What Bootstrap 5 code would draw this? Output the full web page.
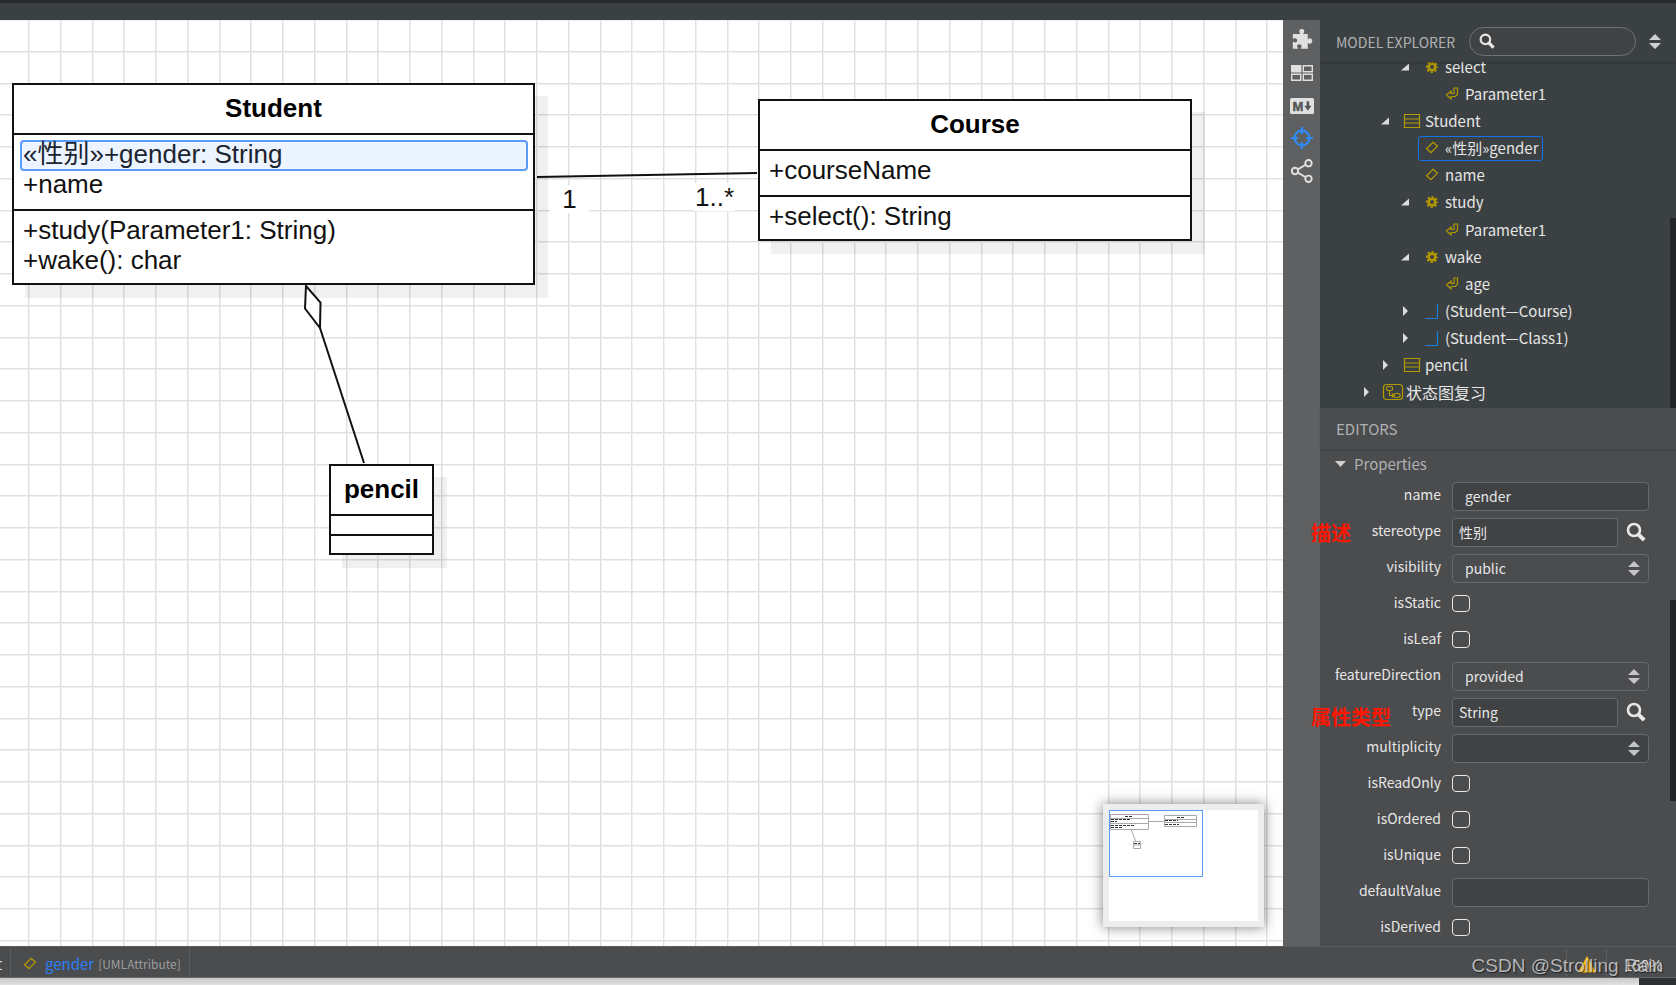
<!DOCTYPE html>
<html lang="en">
<head>
<meta charset="utf-8">
<meta name="viewport" content="width=device-width, initial-scale=1">
<title>Class diagram editor</title>
<link href="https://cdn.jsdelivr.net/npm/bootstrap@5.3.0/dist/css/bootstrap.min.css" rel="stylesheet">
<style>
  :root { --panel: #4b4c4e; --tree: #3b4042; --gold: #b39800; --text: #e6e6e6; --muted: #b0b1b2; --line: #66686a; }
  body { font-family: "Noto Sans CJK SC", sans-serif; font-size: 15px; line-height: 20px; color: var(--text); background: var(--tree); }
  .titlebar { height: 3px; background: #27292c; }
  .menubar { height: 17px; background: var(--tree); }
  .canvas { background: #fff; color: #111; font-family: "Liberation Sans", "Noto Sans CJK SC", sans-serif; font-size: 26px; line-height: 30px; }
  .layer { position: absolute; inset: 0; width: 100%; height: 100%; }

  /* diagram nodes */
  .uml { position: absolute; background: #fff; border: 2px solid #111; box-shadow: 13px 13px 0 rgba(0,0,0,.06); }
  .uml .head { font-weight: 700; text-align: center; height: 48px; padding-top: 8px; color: #000; }
  .uml .comp { border-top: 2px solid #111; padding: 4px 9px 0; }
  .student { left: 12px; top: 63px; width: 523px; height: 202px; }
  .course { left: 758px; top: 79px; width: 434px; height: 142px; }
  .pencil { left: 329px; top: 444px; width: 105px; height: 91px; }
  .attrs { height: 76px; }
  .attr { height: 46px; }
  .empty { height: 20px; }
  .picked { background: #ebf4ff; border: 2px solid #5a9cf8; border-radius: 4px; margin: 1px -4px 0 -3px; padding-left: 1px; line-height: 24px; height: 31px; color: #1b2430; }
  .picked + div { margin-top: -2px; }
  .mult { position: absolute; background: #fff; line-height: 28px; padding: 0 1px; }
  .m-left { left: 550px; top: 165px; width: 39px; text-align: center; }
  .m-right { left: 694px; top: 163px; }
  .minimap { position: absolute; right: 19px; bottom: 19px; width: 161px; height: 123px; border: 6px solid #ededed; background: #fff; box-shadow: 0 0 12px rgba(0,0,0,.5); }

  .toolstrip { width: 37px; background: #5f6062; padding-top: 2px; }
  .toolstrip button { height: 33px; border: 0; background: none; padding: 0; color: #e0e0e0; }
  .side { width: 356px; }
  .explorer { height: 388px; background: var(--tree); }
  .explorer header { height: 42px; padding: 0 15px 0 16px; background: var(--tree); box-shadow: 0 1px 3px rgba(0,0,0,.25); z-index: 1; }
  .caption { color: var(--muted); font-size: 15px; font-weight: 400; }
  .explorer .caption { font-size: 14px; width: 133px; padding-top: 2px; }
  .search { border: 1px solid #707274; border-radius: 15px; height: 29px; width: 167px; background: #414244; padding-left: 9px; }
  .search input { background: none; border: 0; outline: 0; color: var(--text); min-width: 0; width: 120px; }
  .plain { border: 0; background: none; padding: 0; line-height: 0; color: #d0d0d0; }
  .thumb { position: absolute; right: 0; width: 6px; background: #232425; }
  .thumb-tree { top: 198px; bottom: 0; }
  .thumb-props { top: 192px; height: 201px; }

  .tree { margin-top: -9px; padding-bottom: 2px; }
  .tree li { display: flex; align-items: center; gap: 6px; flex: 1 1 0; min-height: 0; }
  .tree .twist { width: 14px; height: 14px; flex: none; }
  .tree .node { display: flex; align-items: center; gap: 2px; height: 25px; border: 1px solid transparent; border-radius: 3px; padding: 0 3px 0 2px; }
  .tree .node svg { width: 22px; height: 22px; flex: none; }
  .tree .on { border-color: #1473e6; }
  .tree .l0 { font-size: 16px; }
  .l0 { padding-left: 39px; } .l1 { padding-left: 58px; } .l2 { padding-left: 78px; } .l3 { padding-left: 98px; }

  .editors { background: var(--panel); }
  .editors header { height: 42px; padding-left: 16px; border-bottom: 1px solid #444547; box-shadow: 0 1px 2px rgba(0,0,0,.12); }
  .group { height: 28px; padding-left: 15px; gap: 8px; }
  .prop { height: 36px; display: flex; align-items: center; position: relative; }
  .prop > label { width: 121px; margin-right: 11px; padding-bottom: 4px; text-align: right; font-size: 14px; flex: none; }
  .field { height: 29px; border: 1px solid var(--line); border-radius: 4px; background-color: #414244; color: var(--text); width: 197px; padding: 0 12px; font-size: 14px; line-height: 20px; outline: 0; }
  .field.pick { width: 166px; padding: 0 6px; border-radius: 3px; margin-right: 8px; }
  select.field { padding: 0 8px; appearance: none; background: var(--panel) url("data:image/svg+xml,%3Csvg xmlns='http://www.w3.org/2000/svg' width='12' height='15'%3E%3Cpath d='M0 6 6 0l6 6zM0 9h12l-6 6z' fill='%23c4c5c6'/%3E%3C/svg%3E") no-repeat right 8px center; text-indent: 4px; }
  select.dark { background-color: #414244; }
  .tick { appearance: none; width: 18px; height: 17px; margin: 0 0 2px; border: 1px solid #e8e8e8; border-radius: 4px; }
  .note { position: absolute; left: -9px; top: 4px; z-index: 2; color: #ff1500; font-weight: 700; font-size: 20px; line-height: 30px; white-space: nowrap; }
  .note-low { top: 8px; }

  .status { height: 32px; padding-top: 2px; background: var(--panel); border-top: 1px solid #5c5d5f; border-bottom: 1px solid #68696b; position: relative; }
  .status .cell { border-right: 1px solid #5c5e60; height: 100%; display: flex; align-items: center; padding-top: 2px; }
  .crumb { width: 11px; overflow: hidden; direction: rtl; }
  .crumb span { margin-right: 8px; }
  .kind { color: #9b9c9d; font-size: 12px; }
  .crumb-link { color: #2d7ff9; }
  .alerts { width: 41px; border-left: 1px solid #5c5e60; justify-content: center; }
  .zoomlvl { width: 69px; padding: 3px 0 0 17px; font-size: 15px; }
  .watermark { position: absolute; right: 13px; top: 8px; font: 19px/22px "Liberation Sans", sans-serif; color: rgba(205,207,210,.85); text-shadow: 1px 1px 1px rgba(0,0,0,.6); }
  .desk { height: 7px; background: linear-gradient(#c8c8c8, #e2e2e2); }
  .desk div { width: 37px; background: #2f3031; }
</style>
</head>
<body class="vh-100 d-flex flex-column overflow-hidden">
<svg width="0" height="0" class="position-absolute" aria-hidden="true">
  <defs>
    <symbol id="i-search" viewBox="0 0 20 20"><circle cx="8" cy="8" r="6" fill="none" stroke="#e8e8e8" stroke-width="2.6"/><path d="m12.4 12.4 5.8 5.8" stroke="#e8e8e8" stroke-width="4"/></symbol>
    <symbol id="i-gear" viewBox="0 0 22 22"><g fill="none" stroke="#b39800"><circle cx="11" cy="11" r="3.3" stroke-width="2.6"/><circle cx="11" cy="11" r="5.2" stroke-width="1.8" stroke-dasharray="2.2 1.884" stroke-dashoffset="1.1"/></g></symbol>
    <symbol id="i-diamond" viewBox="0 0 22 22"><path d="M12 5.3 16.4 9.1 10 15.600 5.600 11.800z" fill="none" stroke="#b39800" stroke-width="1.3"/></symbol>
    <symbol id="i-param" viewBox="0 0 22 22"><path d="M13 5h3.5v6.2l-2.2 2.3H10V16l-4.5-4 4.5-4v2.5h3z" fill="none" stroke="#b39800" stroke-width="1.2"/></symbol>
    <symbol id="i-class" viewBox="0 0 22 22"><path d="M3.5 4.5h15v13h-15zM3.5 9h15M3.5 13h15" fill="none" stroke="#b39800" stroke-width="1.2"/></symbol>
    <symbol id="i-assoc" viewBox="0 0 22 22"><path d="M4 18.5h12.5V4" fill="none" stroke="#1b7fd6" stroke-width="1.2"/></symbol>
    <symbol id="i-state" viewBox="0 0 22 22"><g fill="none" stroke="#b39800" stroke-width="1.2"><rect x="1.5" y="3.500" width="19" height="15" rx="3"/><rect x="4.500" y="5.500" width="6" height="4" rx="1.500"/><rect x="12" y="12.500" width="6" height="4" rx="1.500"/><path d="M7.500 9.500v5H12M9.800 12.500l2.200 2-2.200 2"/></g></symbol>
    <symbol id="i-open" viewBox="0 0 14 14"><path d="M3 10.500h8v-7z" fill="#dcdcdc"/></symbol>
    <symbol id="i-shut" viewBox="0 0 14 14"><path d="M5 2v10l5-5z" fill="#dcdcdc"/></symbol>
  </defs>
</svg>

<div class="titlebar flex-shrink-0"></div>
<div class="menubar flex-shrink-0"></div>

<div class="d-flex flex-fill overflow-hidden">
  <main class="canvas flex-fill position-relative overflow-hidden">
    <svg class="layer" aria-hidden="true">
      <defs>
        <pattern id="grid" x="28" y="0" width="254" height="254" patternUnits="userSpaceOnUse">
          <path stroke="#f0f0f0" d="M1.500 0v254M33.500 0v254M65.500 0v254M96.500 0v254M128.500 0v254M160.500 0v254M192.500 0v254M223.500 0v254M0 .5h254M0 32.500h254M0 64.500h254M0 95.500h254M0 127.500h254M0 159.500h254M0 191.500h254M0 222.500h254"/>
          <path stroke="#e0e0e0" d="M.5 0v254M32.500 0v254M64.500 0v254M95.500 0v254M127.500 0v254M159.500 0v254M191.500 0v254M222.500 0v254M0 31.500h254M0 63.500h254M0 94.500h254M0 126.500h254M0 158.500h254M0 190.500h254M0 221.500h254M0 253.500h254"/>
        </pattern>
      </defs>
      <rect width="100%" height="100%" fill="url(#grid)"/>
    </svg>

    <section class="uml student">
      <div class="head">Student</div>
      <div class="comp attrs"><div class="picked">«性别»+gender: String</div><div>+name</div></div>
      <div class="comp">+study(Parameter1: String)<br>+wake(): char</div>
    </section>
    <section class="uml course">
      <div class="head">Course</div>
      <div class="comp attr">+courseName</div>
      <div class="comp">+select(): String</div>
    </section>
    <section class="uml pencil">
      <div class="head">pencil</div>
      <div class="comp empty"></div>
      <div class="comp"></div>
    </section>
    <span class="mult m-left">1</span>
    <span class="mult m-right">1..*</span>

    <svg class="layer" aria-hidden="true" fill="#fff" stroke="#111" stroke-width="2">
      <path d="M537 157 757 153"/>
      <path d="M306 266 320.500 282.500 320 308 305 288.500z"/>
      <path d="M320 308 364 443"/>
    </svg>

    <div class="minimap">
      <svg class="d-block" width="149" height="111" viewBox="0 0 149 111" aria-hidden="true">
        <g fill="#fff" stroke="#aaa"><path d="M1.500 4.500h38v15h-38zM1.500 8.500h38M1.500 13.500h38M55.500 5.500h32v11h-32zM55.500 9.500h32M55.500 12.500h32M24.500 31.500h7v7h-7zM24.500 35h7M39 11.500h16M22 19l5 13"/></g>
        <g stroke="#333" stroke-dasharray="3 1"><path d="M16 6.500h8M2 9.500h19M2 11.500h6M2 15.500h23M2 17.500h12M68 7.500h7M56 10.500h13M56 14.500h14M25 33.500h6"/></g>
        <rect x=".5" y=".5" width="93" height="66" fill="none" stroke="#5a9cf8"/>
      </svg>
    </div>
  </main>

  <nav class="toolstrip d-flex flex-column flex-shrink-0 align-items-center" aria-label="Panels">
    <button aria-label="Extensions"><svg width="22" height="22" viewBox="0 0 24 24" fill="currentColor"><path d="M20.500 11.200c-1 0-1.200 1-2.200 1V6.500h-5.100c0-1.200 1.300-1.300 1.300-2.800A2.700 2.700 0 0 0 11.700 1 2.700 2.700 0 0 0 9 3.700c0 1.500 1.200 1.600 1.200 2.800H2v5.400c1 0 1.300-.8 2.500-.8 1.400 0 2.200 1.100 2.200 2.400s-.9 2.400-2.200 2.400c-1.200 0-1.500-.8-2.500-.8V22.500h5.600c0-1.100-1-1.300-1-2.500 0-1.300 1.100-2.200 2.500-2.200s2.500.9 2.500 2.200c0 1.200-1 1.400-1 2.500h7.700v-6.200c1 0 1.200.9 2.400.9 1.500 0 2.500-1.400 2.500-3s-1.100-3-2.700-3z"/></svg></button>
    <button aria-label="Thumbnails"><svg width="22" height="16" viewBox="0 0 22 16" fill="none" stroke="currentColor" stroke-width="1.400"><path d="M.7.7h9v6h-9z" fill="currentColor"/><path d="M12.300.7h9v6h-9zM.7 9.300h9v6h-9zM12.300 9.300h9v6h-9z"/></svg></button>
    <button aria-label="Documentation"><svg width="24" height="16" viewBox="0 0 24 16"><rect width="24" height="16" rx="1.500" fill="#e0e0e0"/><text x="2.500" y="12.500" font-family="Liberation Sans" font-weight="700" font-size="13" fill="#55575a" stroke="#55575a" stroke-width=".5">M</text><path d="M16.600 3.300h2.600v4.500h2.300L17.900 12.800l-3.600-5h2.300z" fill="#55575a"/></svg></button>
    <button aria-label="Navigator"><svg width="22" height="22" viewBox="0 0 22 22" fill="none" stroke="#2f8cf5" stroke-width="2.200"><circle cx="11" cy="11" r="7.400"/><path d="M11 0v7M11 15v7M0 11h7M15 11h7"/></svg></button>
    <button aria-label="Relationships"><svg width="22" height="24" viewBox="0 0 22 24" fill="none" stroke="currentColor" stroke-width="1.900"><circle cx="4" cy="12" r="3.200"/><circle cx="17.500" cy="4.200" r="3.200"/><circle cx="17.500" cy="19.800" r="3.200"/><path d="M6.800 10.400 14.700 5.800M6.800 13.600l7.900 4.600"/></svg></button>
  </nav>

  <aside class="side flex-shrink-0 d-flex flex-column">
    <section class="explorer position-relative overflow-hidden d-flex flex-column flex-shrink-0">
      <header class="d-flex align-items-center flex-shrink-0">
        <span class="caption">MODEL EXPLORER</span>
        <div class="search d-flex align-items-center gap-2">
          <svg width="16" height="16"><use href="#i-search"/></svg>
          <input type="search" aria-label="Search elements">
        </div>
        <button class="plain ms-auto" aria-label="Sort"><svg width="12" height="15" fill="currentColor"><path d="M0 6 6 0l6 6zM0 9h12l-6 6z"/></svg></button>
      </header>
      <ul class="tree list-unstyled mb-0 flex-fill d-flex flex-column">
        <li class="l2"><svg class="twist"><use href="#i-open"/></svg><span class="node"><svg><use href="#i-gear"/></svg>select</span></li>
        <li class="l3"><span class="twist"></span><span class="node"><svg><use href="#i-param"/></svg>Parameter1</span></li>
        <li class="l1"><svg class="twist"><use href="#i-open"/></svg><span class="node"><svg><use href="#i-class"/></svg>Student</span></li>
        <li class="l2"><span class="twist"></span><span class="node on"><svg><use href="#i-diamond"/></svg>«性别»gender</span></li>
        <li class="l2"><span class="twist"></span><span class="node"><svg><use href="#i-diamond"/></svg>name</span></li>
        <li class="l2"><svg class="twist"><use href="#i-open"/></svg><span class="node"><svg><use href="#i-gear"/></svg>study</span></li>
        <li class="l3"><span class="twist"></span><span class="node"><svg><use href="#i-param"/></svg>Parameter1</span></li>
        <li class="l2"><svg class="twist"><use href="#i-open"/></svg><span class="node"><svg><use href="#i-gear"/></svg>wake</span></li>
        <li class="l3"><span class="twist"></span><span class="node"><svg><use href="#i-param"/></svg>age</span></li>
        <li class="l2"><svg class="twist"><use href="#i-shut"/></svg><span class="node"><svg><use href="#i-assoc"/></svg>(Student—Course)</span></li>
        <li class="l2"><svg class="twist"><use href="#i-shut"/></svg><span class="node"><svg><use href="#i-assoc"/></svg>(Student—Class1)</span></li>
        <li class="l1"><svg class="twist"><use href="#i-shut"/></svg><span class="node"><svg><use href="#i-class"/></svg>pencil</span></li>
        <li class="l0"><svg class="twist"><use href="#i-shut"/></svg><span class="node"><svg><use href="#i-state"/></svg>状态图复习</span></li>
      </ul>
      <div class="thumb thumb-tree"></div>
    </section>

    <section class="editors position-relative flex-fill">
      <header class="caption d-flex align-items-center">EDITORS</header>
      <div class="group caption d-flex align-items-center"><svg width="11" height="6" fill="#d0d0d0"><path d="M0 0h11L5.500 6z"/></svg>Properties</div>
      <form>
        <div class="prop"><label for="p1">name</label><input class="field" id="p1" value="gender"></div>
        <div class="prop"><span class="note">描述</span><label for="p2">stereotype</label><input class="field pick" id="p2" value="性别"><button type="button" class="plain" aria-label="Find stereotype"><svg width="20" height="20"><use href="#i-search"/></svg></button></div>
        <div class="prop"><label for="p3">visibility</label><select class="field" id="p3"><option>public</option></select></div>
        <div class="prop"><label for="p4">isStatic</label><input type="checkbox" class="tick" id="p4"></div>
        <div class="prop"><label for="p5">isLeaf</label><input type="checkbox" class="tick" id="p5"></div>
        <div class="prop"><label for="p6">featureDirection</label><select class="field" id="p6"><option>provided</option></select></div>
        <div class="prop"><span class="note note-low">属性类型</span><label for="p7">type</label><input class="field pick" id="p7" value="String"><button type="button" class="plain" aria-label="Find type"><svg width="20" height="20"><use href="#i-search"/></svg></button></div>
        <div class="prop"><label for="p8">multiplicity</label><select class="field dark" id="p8"><option></option></select></div>
        <div class="prop"><label for="p9">isReadOnly</label><input type="checkbox" class="tick" id="p9"></div>
        <div class="prop"><label for="p10">isOrdered</label><input type="checkbox" class="tick" id="p10"></div>
        <div class="prop"><label for="p11">isUnique</label><input type="checkbox" class="tick" id="p11"></div>
        <div class="prop"><label for="p12">defaultValue</label><input class="field" id="p12"></div>
        <div class="prop"><label for="p13">isDerived</label><input type="checkbox" class="tick" id="p13"></div>
      </form>
      <div class="thumb thumb-props"></div>
    </section>
  </aside>
</div>

<footer class="status d-flex flex-shrink-0">
  <div class="cell crumb"><span>t</span></div>
  <div class="cell ps-2 pe-2"><svg width="22" height="22"><use href="#i-diamond"/></svg><a href="#" class="crumb-link text-decoration-none ms-1">gender</a><span class="kind ms-1">[UMLAttribute]</span></div>
  <div class="cell alerts ms-auto"><svg width="18" height="17" viewBox="0 0 18 17"><path d="M9 0 18 16.500H0z" fill="#ffb900"/><path d="M9 5v6M9 12.500v2" stroke="#333" stroke-width="1.800"/></svg></div>
  <div class="zoomlvl d-flex align-items-center">160%</div>
  <div class="watermark">CSDN @Strolling Rain</div>
</footer>
<div class="desk d-flex flex-shrink-0"><div class="ms-auto"></div></div>
<script src="https://cdn.jsdelivr.net/npm/bootstrap@5.3.0/dist/js/bootstrap.bundle.min.js"></script>
</body>
</html>
